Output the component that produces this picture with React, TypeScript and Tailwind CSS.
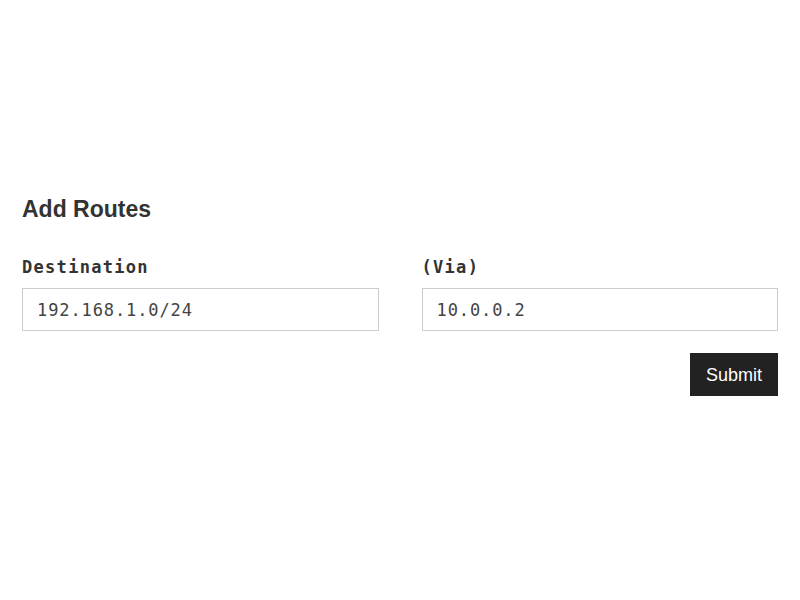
export default function App() {
  return (
    <div className="min-h-[600px] w-[800px] bg-white px-[22px] pt-[195px] text-[#333]">
      <h2 className="m-0 text-[23px] font-bold leading-[28px] font-['Liberation_Sans',Arial,sans-serif]">
        Add Routes
      </h2>

      <form className="mt-[34px]" onSubmit={(e) => e.preventDefault()}>
        <div className="grid grid-cols-2 gap-x-[43px]">
          <div>
            <label className="block text-[17px] font-bold leading-[20px] tracking-[1.3px] font-['DejaVu_Sans_Mono',monospace]">
              Destination
            </label>
            <input
              defaultValue="192.168.1.0/24"
              className="mt-[11px] block h-[43px] w-full border border-[#cccccc] bg-white px-[14px] text-[17px] tracking-[0.9px] text-[#444] outline-none font-['DejaVu_Sans_Mono',monospace]"
            />
          </div>
          <div>
            <label className="block text-[17px] font-bold leading-[20px] tracking-[1.3px] font-['DejaVu_Sans_Mono',monospace]">
              (Via)
            </label>
            <input
              defaultValue="10.0.0.2"
              className="mt-[11px] block h-[43px] w-full border border-[#cccccc] bg-white px-[14px] text-[17px] tracking-[0.9px] text-[#444] outline-none font-['DejaVu_Sans_Mono',monospace]"
            />
          </div>
        </div>

        <div className="mt-[22px] flex justify-end">
          <button
            type="submit"
            className="h-[43px] bg-[#222222] px-[16px] pt-[2px] text-[18px] text-white font-['Liberation_Sans',Arial,sans-serif]"
          >
            Submit
          </button>
        </div>
      </form>
    </div>
  );
}
